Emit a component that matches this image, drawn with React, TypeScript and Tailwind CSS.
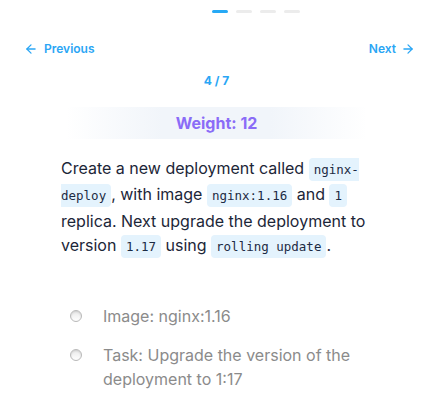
import { ArrowLeft, ArrowRight } from "lucide-react";

const code = "rounded bg-[#e4f3fd] px-[5px] py-[4px] text-[12.5px] text-[#1c2b44] [font-family:'DejaVu_Sans_Mono',monospace]";

export default function App() {
  return (
    <div className="min-h-screen bg-white [font-family:Inter,'Noto_Sans',sans-serif]">
      {/* Progress */}
      <div className="flex gap-2 pl-[212px] pt-[10px]">
        <span className="h-[3px] w-4 rounded-full bg-[#27a9f5]" />
        <span className="h-[3px] w-4 rounded-full bg-[#ececec]" />
        <span className="h-[3px] w-4 rounded-full bg-[#ececec]" />
        <span className="h-[3px] w-4 rounded-full bg-[#ececec]" />
      </div>

      {/* Nav */}
      <div className="mt-[27px] flex items-center justify-between pl-6 pr-[18px] text-[12px] font-semibold text-[#2aa6f5]">
        <button className="flex items-center gap-[6px]">
          <ArrowLeft size={14} strokeWidth={2.2} />
          Previous
        </button>
        <button className="flex items-center gap-[5px]">
          Next
          <ArrowRight size={14} strokeWidth={2.2} />
        </button>
      </div>

      <div className="mt-[14px] text-center text-[12px] font-bold text-[#2aa6f5]">4 / 7</div>

      {/* Weight */}
      <div className="mx-[66px] mt-[17px] flex h-8 items-center justify-center bg-[linear-gradient(90deg,rgba(241,245,250,0),#f1f5fa_32%,#f1f5fa_68%,rgba(241,245,250,0))] text-[16px] font-bold text-[#8a6cf7]">
        Weight: 12
      </div>

      {/* Question */}
      <p className="mt-[17px] pl-[61px] pr-[56px] text-[16px] leading-[24.4px] text-[#1c2638]">
        Create a new deployment called <code className={code}>nginx-deploy</code>, with image{" "}
        <code className={code}>nginx:1.16</code> and <code className={code}>1</code> replica. Next upgrade the
        deployment to version <code className={code}>1.17</code> using{" "}
        <code className={code}>rolling update</code>.
      </p>

      {/* Options */}
      <div className="mt-[44px] flex flex-col gap-[15px] pl-[70px] pr-[60px] text-[16px] leading-6 text-[#8b8b8b]">
        <label className="flex items-start gap-[21px]">
          <span className="mt-[6px] h-3 w-3 shrink-0 rounded-full border border-[#b9b9b9] bg-[linear-gradient(180deg,#e9e9e9,#ffffff)] shadow-[inset_0_1px_2px_rgba(0,0,0,0.12)]" />
          <span>Image: nginx:1.16</span>
        </label>
        <label className="flex items-start gap-[21px]">
          <span className="mt-[6px] h-3 w-3 shrink-0 rounded-full border border-[#b9b9b9] bg-[linear-gradient(180deg,#e9e9e9,#ffffff)] shadow-[inset_0_1px_2px_rgba(0,0,0,0.12)]" />
          <span>Task: Upgrade the version of the deployment to 1:17</span>
        </label>
      </div>
    </div>
  );
}
